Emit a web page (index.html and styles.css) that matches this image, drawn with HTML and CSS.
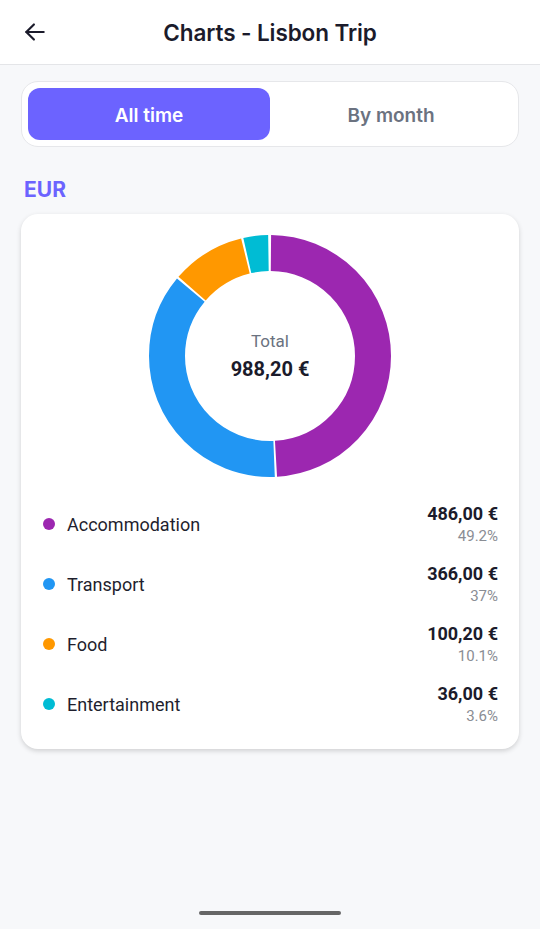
FILE: index.html
```html
<!DOCTYPE html>
<html lang="en">
<head>
    <meta charset="UTF-8">
    <meta name="viewport" content="width=device-width, initial-scale=1.0">
    <title>Charts - Lisbon Trip</title>
    <link rel="stylesheet" href="styles.css">
</head>
<body>
    <header class="topbar">
        <button class="back-btn" aria-label="Back">
            <svg width="26" height="26" viewBox="0 0 24 24" fill="none" stroke="#1b1b2b" stroke-width="2" stroke-linecap="round" stroke-linejoin="round">
                <path d="M20 12H4"/>
                <path d="M11 5l-7 7 7 7"/>
            </svg>
        </button>
        <h1>Charts - Lisbon Trip</h1>
    </header>

    <main class="content">
        <div class="segmented">
            <div class="seg-item active">All time</div>
            <div class="seg-item">By month</div>
        </div>

        <h2 class="currency">EUR</h2>

        <section class="card">
            <div class="donut">
                <svg width="242" height="242" viewBox="0 0 242 242">
                    <g transform="rotate(-90 121 121)">
                        <circle cx="121" cy="121" r="103" fill="none" stroke="#9c27b0" stroke-width="36" pathLength="100" stroke-dasharray="48.9 51.1" stroke-dashoffset="-0.15"/>
                        <circle cx="121" cy="121" r="103" fill="none" stroke="#2196f3" stroke-width="36" pathLength="100" stroke-dasharray="36.7 63.3" stroke-dashoffset="-49.35"/>
                        <circle cx="121" cy="121" r="103" fill="none" stroke="#ff9800" stroke-width="36" pathLength="100" stroke-dasharray="9.8 90.2" stroke-dashoffset="-86.35"/>
                        <circle cx="121" cy="121" r="103" fill="none" stroke="#00bcd4" stroke-width="36" pathLength="100" stroke-dasharray="3.3 96.7" stroke-dashoffset="-96.45"/>
                    </g>
                </svg>
                <div class="donut-center">
                    <span class="total-label">Total</span>
                    <span class="total-value">988,20 €</span>
                </div>
            </div>

            <ul class="legend">
                <li class="legend-row">
                    <span class="dot" style="background:#9c27b0"></span>
                    <span class="cat">Accommodation</span>
                    <div class="amounts">
                        <span class="amount">486,00 €</span>
                        <span class="pct">49.2%</span>
                    </div>
                </li>
                <li class="legend-row">
                    <span class="dot" style="background:#2196f3"></span>
                    <span class="cat">Transport</span>
                    <div class="amounts">
                        <span class="amount">366,00 €</span>
                        <span class="pct">37%</span>
                    </div>
                </li>
                <li class="legend-row">
                    <span class="dot" style="background:#ff9800"></span>
                    <span class="cat">Food</span>
                    <div class="amounts">
                        <span class="amount">100,20 €</span>
                        <span class="pct">10.1%</span>
                    </div>
                </li>
                <li class="legend-row">
                    <span class="dot" style="background:#00bcd4"></span>
                    <span class="cat">Entertainment</span>
                    <div class="amounts">
                        <span class="amount">36,00 €</span>
                        <span class="pct">3.6%</span>
                    </div>
                </li>
            </ul>
        </section>
    </main>

    <div class="home-bar"></div>
</body>
</html>
```

FILE: styles.css
```css
* {
    box-sizing: border-box;
}

body {
    margin: 0;
    width: 540px;
    height: 929px;
    background-color: #f7f8fa;
    font-family: Roboto, "Noto Sans", sans-serif;
    color: #1b1b2b;
    display: flex;
    flex-direction: column;
    overflow: hidden;
}

.topbar {
    height: 65px;
    background: #fff;
    border-bottom: 1px solid #e4e5e8;
    display: flex;
    align-items: center;
    justify-content: center;
    position: relative;
}

.back-btn {
    position: absolute;
    left: 22px;
    top: 19px;
    background: none;
    border: none;
    padding: 0;
    display: flex;
}

.topbar h1 {
    margin: 1px 0 0;
    font-family: Inter, Roboto, sans-serif;
    font-size: 22.5px;
    font-weight: 600;
    letter-spacing: -0.1px;
}

.content {
    flex: 1;
    padding: 16px 21px 0;
}

.segmented {
    display: flex;
    height: 66px;
    padding: 6px;
    background: #fff;
    border: 1px solid #e6e7ea;
    border-radius: 17px;
}

.seg-item {
    flex: 1;
    display: flex;
    align-items: center;
    justify-content: center;
    padding-top: 2px;
    font-family: Inter, Roboto, sans-serif;
    font-size: 19px;
    font-weight: 600;
    color: #6b7280;
    border-radius: 12px;
}

.seg-item.active {
    background: #6c63ff;
    color: #fff;
}

.currency {
    margin: 30px 0 0 3px;
    font-family: Inter, Roboto, sans-serif;
    font-size: 21px;
    font-weight: 700;
    color: #6c63ff;
    line-height: 26px;
}

.card {
    margin-top: 11px;
    background: #fff;
    border-radius: 17px;
    box-shadow: 0 2px 5px rgba(0, 0, 0, 0.16);
    padding: 21px 21px 22px;
}

.donut {
    width: 242px;
    height: 242px;
    margin: 0 auto;
    position: relative;
}

.donut svg {
    display: block;
}

.donut-center {
    position: absolute;
    inset: 0;
    display: flex;
    flex-direction: column;
    align-items: center;
    justify-content: center;
    gap: 2px;
}

.total-label {
    font-size: 17px;
    color: #6b7280;
    line-height: 24px;
}

.total-value {
    font-size: 20px;
    font-weight: 700;
    line-height: 28px;
}

.legend {
    list-style: none;
    margin: 24px 0 0;
    padding: 0;
    display: flex;
    flex-direction: column;
    gap: 14px;
}

.legend-row {
    display: flex;
    align-items: center;
    height: 46px;
}

.dot {
    width: 12px;
    height: 12px;
    border-radius: 50%;
    margin: 0 12px 0 1px;
}

.cat {
    flex: 1;
    font-size: 18px;
    color: #1f1f2e;
}

.amounts {
    display: flex;
    flex-direction: column;
    align-items: flex-end;
}

.amount {
    font-size: 18px;
    font-weight: 700;
    line-height: 23px;
}

.pct {
    font-size: 15px;
    color: #8a8d94;
    line-height: 22px;
}

.home-bar {
    width: 142px;
    height: 4px;
    border-radius: 2px;
    background: #666;
    margin: 0 auto 14px;
}
```
